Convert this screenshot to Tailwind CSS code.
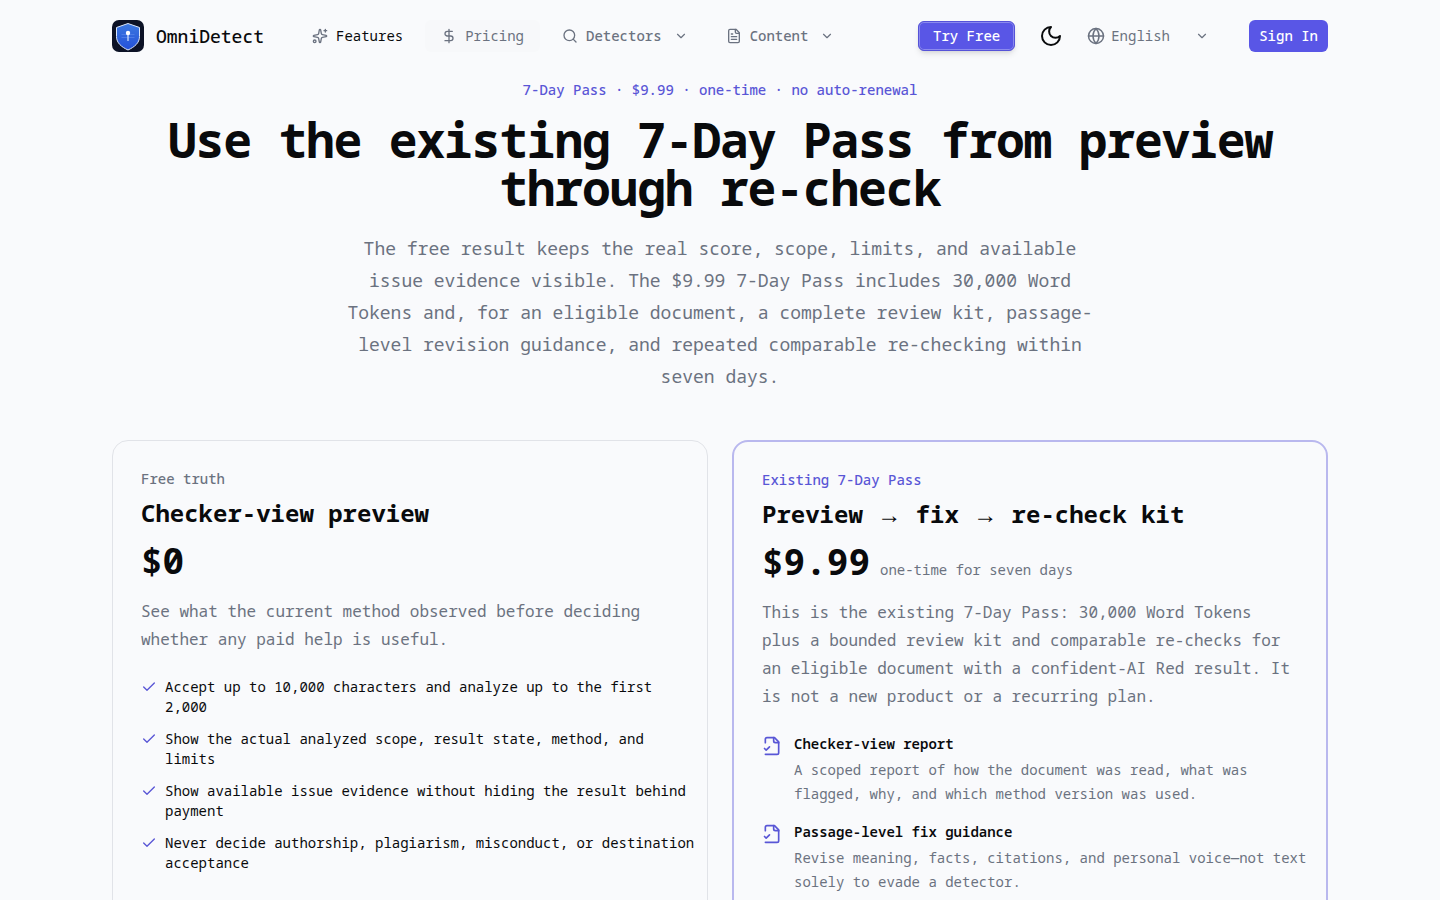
<!DOCTYPE html>
<html lang="en">

<head>
    <meta charset="UTF-8">
    <meta name="viewport" content="width=device-width, initial-scale=1.0">
    <title>OmniDetect - Pricing</title>
    <script src="https://cdn.jsdelivr.net/npm/@tailwindcss/browser@4"></script>
</head>

<body class="bg-[#f9fafc] font-['Noto_Sans_Mono','DejaVu_Sans_Mono',monospace] text-[#090a0c]">
    <!-- Icons -->
    <svg class="hidden" aria-hidden="true">
        <symbol id="chevron" viewBox="0 0 24 24"><path d="m6 9 6 6 6-6" /></symbol>
        <symbol id="check" viewBox="0 0 24 24"><path d="M20 6 9 17l-5-5" /></symbol>
        <symbol id="file-check" viewBox="0 0 24 24">
            <path d="M4 22h14a2 2 0 0 0 2-2V7l-5-5H6a2 2 0 0 0-2 2v4" />
            <path d="M14 2v4a2 2 0 0 0 2 2h4" />
            <path d="m3 15 2 2 4-4" />
        </symbol>
    </svg>

    <header>
        <div class="mx-auto flex h-18 max-w-7xl items-center justify-between px-8">
            <div class="flex items-center gap-8">
                <a href="#" class="flex items-center gap-3">
                    <svg class="size-8" viewBox="0 0 32 32">
                        <defs>
                            <linearGradient id="shield" x1="0" y1="0" x2="0" y2="1">
                                <stop offset="0" stop-color="#3b78e0" />
                                <stop offset="1" stop-color="#2450d8" />
                            </linearGradient>
                        </defs>
                        <rect width="32" height="32" rx="7" fill="#0c1226" />
                        <path d="M16 3.5 27.5 7.5v9c0 6.500-5 10.500-11.500 13.500C9.500 27 4.500 23 4.500 16.500v-9z" fill="url(#shield)" stroke="#dbe7fb" stroke-width="1" stroke-linejoin="round" />
                        <path d="M9.500 14.500h13M9.500 17.500h13" stroke="#5f8cec" stroke-width=".6" />
                        <path d="M16 13v8" stroke="#c9dafa" stroke-width="1.300" />
                        <circle cx="16" cy="13" r="2.200" fill="#fff" />
                    </svg>
                    <span class="text-lg font-medium">OmniDetect</span>
                </a>
                <nav class="flex items-center gap-1.5 text-sm font-medium text-[#6b7280]">
                    <a href="#" class="flex h-8 items-center gap-2 rounded-md px-4 font-normal">
                        <svg class="size-4" viewBox="0 0 24 24" fill="none" stroke="currentColor" stroke-width="2" stroke-linecap="round" stroke-linejoin="round">
                            <path d="M11.017 2.814a1 1 0 0 1 1.966 0l1.051 5.558a2 2 0 0 0 1.594 1.594l5.558 1.051a1 1 0 0 1 0 1.966l-5.558 1.051a2 2 0 0 0-1.594 1.594l-1.051 5.558a1 1 0 0 1-1.966 0l-1.051-5.558a2 2 0 0 0-1.594-1.594l-5.558-1.051a1 1 0 0 1 0-1.966l5.558-1.051a2 2 0 0 0 1.594-1.594z" />
                            <path d="M20 2v4M22 4h-4" />
                            <circle cx="4" cy="20" r="2" />
                        </svg>
                        <span class="text-[#090a0c]">Features</span>
                    </a>
                    <a href="#" class="flex h-8 items-center gap-2 rounded-md bg-[#f7f8fa] px-4 font-normal">
                        <svg class="size-4" viewBox="0 0 24 24" fill="none" stroke="currentColor" stroke-width="2" stroke-linecap="round" stroke-linejoin="round">
                            <path d="M12 2v20M17 5H9.500a3.500 3.500 0 0 0 0 7h5a3.500 3.500 0 0 1 0 7H6" />
                        </svg>
                        Pricing
                    </a>
                    <button type="button" class="flex h-8 items-center gap-2 rounded-md px-4">
                        <svg class="size-4" viewBox="0 0 24 24" fill="none" stroke="currentColor" stroke-width="2" stroke-linecap="round" stroke-linejoin="round">
                            <circle cx="11" cy="11" r="8" />
                            <path d="m21 21-4.300-4.300" />
                        </svg>
                        Detectors
                        <svg class="ml-1 size-3.5" fill="none" stroke="currentColor" stroke-width="2" stroke-linecap="round" stroke-linejoin="round"><use href="#chevron" /></svg>
                    </button>
                    <button type="button" class="flex h-8 items-center gap-2 rounded-md px-4">
                        <svg class="size-4" viewBox="0 0 24 24" fill="none" stroke="currentColor" stroke-width="2" stroke-linecap="round" stroke-linejoin="round">
                            <path d="M15 2H6a2 2 0 0 0-2 2v16a2 2 0 0 0 2 2h12a2 2 0 0 0 2-2V7Z" />
                            <path d="M14 2v4a2 2 0 0 0 2 2h4M10 9H8M16 13H8M16 17H8" />
                        </svg>
                        Content
                        <svg class="ml-1 size-3.5" fill="none" stroke="currentColor" stroke-width="2" stroke-linecap="round" stroke-linejoin="round"><use href="#chevron" /></svg>
                    </button>
                </nav>
            </div>

            <div class="flex items-center text-sm">
                <a href="#" class="flex h-[30px] items-center rounded-md border border-[#5552d8] bg-[#5956e6] px-3.5 font-medium text-white shadow-md inset-ring inset-ring-[#8b8aee]">Try Free</a>
                <button type="button" aria-label="Toggle theme" class="ml-6">
                    <svg class="size-6" viewBox="0 0 24 24" fill="none" stroke="currentColor" stroke-width="2" stroke-linecap="round" stroke-linejoin="round">
                        <path d="M12 3a6 6 0 0 0 9 9 9 9 0 1 1-9-9Z" />
                    </svg>
                </button>
                <label class="ml-6 flex items-center text-[#6b7280]">
                    <svg class="size-[18px]" viewBox="0 0 24 24" fill="none" stroke="currentColor" stroke-width="2" stroke-linecap="round" stroke-linejoin="round">
                        <circle cx="12" cy="12" r="10" />
                        <path d="M12 2a14.500 14.500 0 0 0 0 20 14.500 14.500 0 0 0 0-20M2 12h20" />
                    </svg>
                    <select aria-label="Language" class="ml-1.5 w-21 appearance-none">
                        <option>English</option>
                    </select>
                    <svg class="size-3.5" fill="none" stroke="currentColor" stroke-width="2" stroke-linecap="round" stroke-linejoin="round"><use href="#chevron" /></svg>
                </label>
                <a href="#" class="ml-10 flex h-8 items-center rounded-md bg-[#5956e6] px-2.5 font-medium text-white">Sign In</a>
            </div>
        </div>
    </header>

    <main class="mx-auto max-w-7xl px-8 pt-2">
        <section class="text-center">
            <p class="text-sm font-medium text-[#5956d6]">7-Day Pass · $9.99 · one-time · no auto-renewal</p>
            <h1 class="mt-4 text-5xl leading-none font-bold tracking-tight">Use the existing 7-Day Pass from preview through re-check</h1>
            <p class="mx-auto mt-5 max-w-3xl text-lg leading-8 text-[#6b7280]">The free result keeps the real score, scope, limits, and available issue evidence visible. The $9.99 7-Day Pass includes 30,000 Word Tokens and, for an eligible document, a complete review kit, passage-level revision guidance, and repeated comparable re-checking within seven days.</p>
        </section>

        <section class="mt-12 grid grid-cols-2 gap-6">
            <!-- Free -->
            <article class="rounded-2xl border border-[#e1e3e8] p-7">
                <p class="text-sm font-medium text-[#6b7280]">Free truth</p>
                <h2 class="mt-2 text-2xl font-bold">Checker-view preview</h2>
                <p class="mt-3 text-4xl font-bold">$0</p>
                <p class="mt-4 leading-7 text-[#6b7280]">See what the current method observed before deciding whether any paid help is useful.</p>
                <ul class="mt-6 -mr-4 space-y-3 text-sm">
                    <li class="flex gap-2">
                        <svg class="mt-0.5 size-4 shrink-0 text-[#5956d6]" fill="none" stroke="currentColor" stroke-width="2" stroke-linecap="round" stroke-linejoin="round"><use href="#check" /></svg>
                        Accept up to 10,000 characters and analyze up to the first 2,000
                    </li>
                    <li class="flex gap-2">
                        <svg class="mt-0.5 size-4 shrink-0 text-[#5956d6]" fill="none" stroke="currentColor" stroke-width="2" stroke-linecap="round" stroke-linejoin="round"><use href="#check" /></svg>
                        Show the actual analyzed scope, result state, method, and limits
                    </li>
                    <li class="flex gap-2">
                        <svg class="mt-0.5 size-4 shrink-0 text-[#5956d6]" fill="none" stroke="currentColor" stroke-width="2" stroke-linecap="round" stroke-linejoin="round"><use href="#check" /></svg>
                        Show available issue evidence without hiding the result behind payment
                    </li>
                    <li class="flex gap-2">
                        <svg class="mt-0.5 size-4 shrink-0 text-[#5956d6]" fill="none" stroke="currentColor" stroke-width="2" stroke-linecap="round" stroke-linejoin="round"><use href="#check" /></svg>
                        Never decide authorship, plagiarism, misconduct, or destination acceptance
                    </li>
                </ul>
            </article>

            <!-- 7-Day Pass -->
            <article class="rounded-2xl border-2 border-[#b9b8ee] p-7">
                <p class="text-sm font-medium text-[#5956d6]">Existing 7-Day Pass</p>
                <h2 class="mt-2 text-2xl font-bold">Preview <span class="font-['Liberation_Serif',serif] leading-none">→</span> fix <span class="font-['Liberation_Serif',serif] leading-none">→</span> re-check kit</h2>
                <p class="mt-3 flex items-baseline gap-2.5">
                    <span class="text-4xl font-bold">$9.99</span>
                    <span class="text-sm text-[#6b7280]">one-time for seven days</span>
                </p>
                <p class="mt-4 leading-7 text-[#6b7280]">This is the existing 7-Day Pass: 30,000 Word Tokens plus a bounded review kit and comparable re-checks for an eligible document with a confident-AI Red result. It is not a new product or a recurring plan.</p>
                <ul class="mt-6 -mr-3 space-y-4 text-sm">
                    <li class="flex gap-3">
                        <svg class="mt-0.5 size-5 shrink-0 text-[#5956d6]" fill="none" stroke="currentColor" stroke-width="2" stroke-linecap="round" stroke-linejoin="round"><use href="#file-check" /></svg>
                        <div>
                            <h3 class="font-semibold">Checker-view report</h3>
                            <p class="mt-1 leading-6 text-[#6b7280]">A scoped report of how the document was read, what was flagged, why, and which method version was used.</p>
                        </div>
                    </li>
                    <li class="flex gap-3">
                        <svg class="mt-0.5 size-5 shrink-0 text-[#5956d6]" fill="none" stroke="currentColor" stroke-width="2" stroke-linecap="round" stroke-linejoin="round"><use href="#file-check" /></svg>
                        <div>
                            <h3 class="font-semibold">Passage-level fix guidance</h3>
                            <p class="mt-1 leading-6 text-[#6b7280]">Revise meaning, facts, citations, and personal voice—not text solely to evade a detector.</p>
                        </div>
                    </li>
                </ul>
            </article>
        </section>
    </main>
</body>

</html>
